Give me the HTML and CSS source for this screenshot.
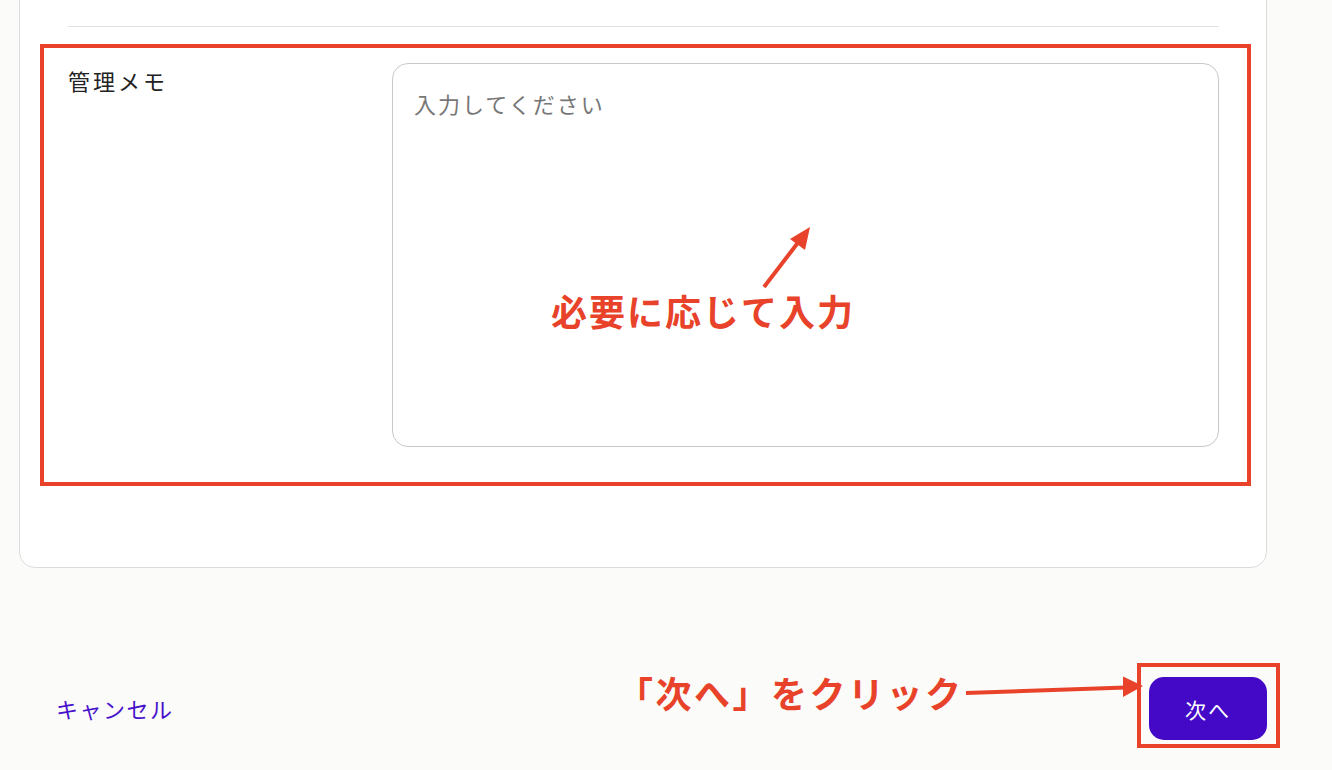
FILE: index.html
```html
<!DOCTYPE html>
<html lang="ja">
<head>
<meta charset="utf-8">
<title>管理メモ</title>
<link rel="stylesheet" href="styles.css">
</head>
<body>
<div class="page">
  <section class="card">
    <div class="card-top"></div>
    <hr class="divider">
    <div class="form-row highlight">
      <label class="row-label" for="memo">管理メモ</label>
      <textarea id="memo" class="memo" placeholder="入力してください"></textarea>
    </div>
  </section>

  <footer class="footer">
    <a class="cancel" href="#">キャンセル</a>
    <div class="btn-wrap highlight">
      <button class="btn-next" type="button">次へ</button>
    </div>
  </footer>

  <div class="note note-memo">必要に応じて入力</div>
  <div class="note note-next">「次へ」をクリック</div>

  <svg class="arrow arrow-memo" width="1332" height="770" viewBox="0 0 1332 770" aria-hidden="true">
    <line x1="764" y1="287" x2="800" y2="240" stroke="#e8432a" stroke-width="4" stroke-linecap="butt"/>
    <polygon points="810,227 790,239 805,250" fill="#e8432a"/>
  </svg>
  <svg class="arrow arrow-next" width="1332" height="770" viewBox="0 0 1332 770" aria-hidden="true">
    <line x1="966" y1="693" x2="1126" y2="687.5" stroke="#e8432a" stroke-width="4"/>
    <polygon points="1143,686 1123,676.5 1123,697" fill="#e8432a"/>
  </svg>
</div>
</body>
</html>
```

FILE: styles.css
```css
* { box-sizing: border-box; }

html, body {
  margin: 0;
  padding: 0;
}

body {
  background: #fbfbf9;
  font-family: "Noto Sans CJK JP", "Noto Sans", sans-serif;
  color: #222;
  width: 1332px;
  height: 770px;
  overflow: hidden;
}

.page {
  position: relative;
  display: flow-root;
  width: 1332px;
  height: 770px;
}

.card {
  margin: -40px 0 0 19px;
  width: 1248px;
  background: #fff;
  border: 1px solid #dcdcdc;
  border-radius: 16px;
  padding: 0 47px 81px 48px;
}

.card-top {
  height: 65px;
}

.divider {
  margin: 0;
  border: 0;
  height: 1px;
  background: #e2e2e2;
}

.highlight {
  border: 4px solid #e8432a;
}

.form-row {
  margin: 17px -32px 0 -28px;
  display: grid;
  grid-template-columns: 324px 1fr;
  padding: 15px 28px 35px 24px;
}

.row-label {
  font-size: 22px;
  letter-spacing: 3px;
  line-height: 35px;
  padding-top: 0;
  color: #222;
}

.memo {
  display: block;
  width: 100%;
  height: 384px;
  border: 1px solid #c9c9c9;
  border-radius: 16px;
  padding: 22px 21px 20px;
  font-family: inherit;
  font-size: 22px;
  letter-spacing: 2px;
  line-height: 35px;
  resize: none;
  background: #fff;
  outline: none;
}

.memo::placeholder {
  color: #777;
}

.footer {
  display: flex;
  justify-content: space-between;
  align-items: center;
  margin-top: 95px;
  padding: 0 52px 0 56px;
}

.cancel {
  color: #4812cc;
  text-decoration: none;
  font-size: 22px;
  letter-spacing: 1.5px;
  margin-top: 4px;
}

.btn-wrap {
  padding: 10px 9px 4px 8px;
}

.btn-next {
  display: block;
  width: 118px;
  height: 63px;
  border: 0;
  border-radius: 15px;
  background: #4309c7;
  color: #fff;
  font-family: inherit;
  font-size: 21px;
  letter-spacing: 2px;
}

.note {
  position: absolute;
  color: #e8432a;
  font-weight: 700;
  font-size: 36px;
  line-height: 1;
  white-space: nowrap;
}

.note-memo {
  left: 551px;
  top: 292px;
  letter-spacing: 2px;
}

.note-next {
  left: 617px;
  top: 674px;
  letter-spacing: 2.5px;
}

.arrow {
  position: absolute;
  left: 0;
  top: 0;
  pointer-events: none;
}
```
